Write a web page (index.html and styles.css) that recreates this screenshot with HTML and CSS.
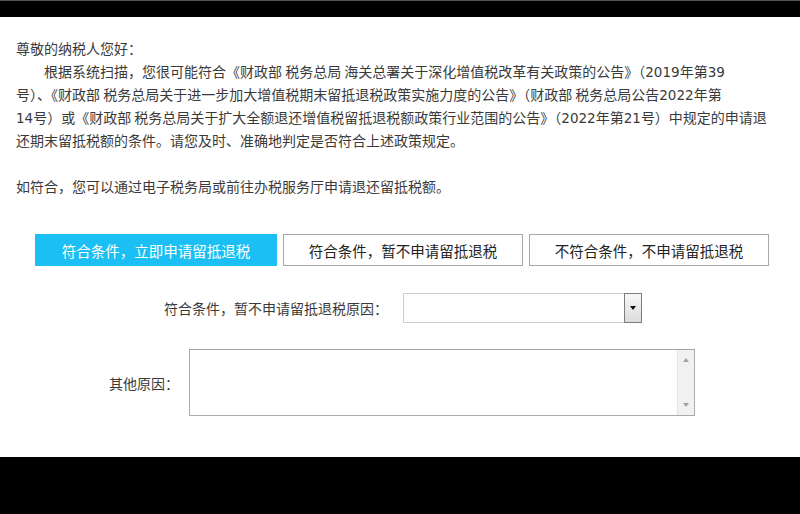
FILE: index.html
```html
<!DOCTYPE html>
<html lang="zh-CN">
<head>
<meta charset="utf-8">
<title>留抵退税提示</title>
<link rel="stylesheet" href="styles.css">
</head>
<body>
<div class="page">
  <div class="bar bar-top"></div>
  <main class="content">
    <p class="greet">尊敬的纳税人您好：</p>
    <p class="notice">根据系统扫描，您很可能符合《财政部 税务总局 海关总署关于深化增值税改革有关政策的公告》（<span class="num">2019</span>年第<span class="num">39</span><br>号）、《财政部 税务总局关于进一步加大增值税期末留抵退税政策实施力度的公告》（财政部 税务总局公告<span class="num">2022</span>年第<br><span class="num">14</span>号）或《财政部 税务总局关于扩大全额退还增值税留抵退税额政策行业范围的公告》（<span class="num">2022</span>年第<span class="num">21</span>号）中规定的申请退<br>还期末留抵税额的条件。请您及时、准确地判定是否符合上述政策规定。</p>
    <p class="tip">如符合，您可以通过电子税务局或前往办税服务厅申请退还留抵税额。</p>

    <div class="actions">
      <button class="btn btn-primary" type="button">符合条件，立即申请留抵退税</button>
      <button class="btn" type="button">符合条件，暂不申请留抵退税</button>
      <button class="btn" type="button">不符合条件，不申请留抵退税</button>
    </div>

    <div class="field field-select">
      <label class="field-label" for="reason">符合条件，暂不申请留抵退税原因：</label>
      <div class="select-wrap">
        <select id="reason" class="select"><option></option></select>
        <span class="select-arrow"><span class="tri-down"></span></span>
      </div>
    </div>

    <div class="field field-text">
      <label class="field-label" for="other">其他原因：</label>
      <div class="ta-wrap">
        <textarea id="other" class="textarea"></textarea>
        <span class="ta-scroll"><span class="sc-up"></span><span class="sc-down"></span></span>
      </div>
    </div>
  </main>
  <div class="bar bar-bottom"></div>
</div>
</body>
</html>
```

FILE: styles.css
```css
* { box-sizing: border-box; }

html, body {
  margin: 0;
  padding: 0;
  background: #ffffff;
}

body {
  font-family: "Noto Sans CJK SC", sans-serif;
  font-size: 14px;
  color: #3a3a3a;
}

.page {
  width: 800px;
  height: 514px;
  display: flex;
  flex-direction: column;
}

.bar { background: #000; flex: none; }
.bar-top { height: 17px; border-top: 1px solid #555; }
.bar-bottom { height: 57px; }

.content {
  height: 440px;
  flex: none;
  padding: 20px 16px 0 16px;
  display: flex;
  flex-direction: column;
}

.greet, .notice, .tip {
  margin: 0;
  line-height: 23px;
  white-space: nowrap;
  font-family: "Noto Sans CJK SC", sans-serif;
}

.greet { height: 23px; }
.notice { height: 92px; text-indent: 2em; }
.tip { height: 23px; margin-top: 23px; }

.num {
  font-family: "DejaVu Sans", sans-serif;
  font-size: 13.5px;
  line-height: 1;
}

.actions {
  margin-top: 36px;
  padding-left: 4px;
  display: flex;
  justify-content: center;
  gap: 6px;
}

.btn {
  width: 240px;
  height: 32px;
  margin: 0;
  padding: 0;
  border: 1px solid #a8a8a8;
  background: #ffffff;
  color: #222;
  font-family: "Noto Sans CJK SC", sans-serif;
  font-size: 14.5px;
  display: flex;
  align-items: center;
  justify-content: center;
}

.btn-primary {
  width: 242px;
  background: #1bbff3;
  border-color: #1bbff3;
  color: #ffffff;
}

.field {
  display: flex;
  align-items: center;
  justify-content: center;
}

.field-label {
  font-family: "Noto Sans CJK SC", sans-serif;
  font-size: 14px;
  color: #3a3a3a;
  white-space: nowrap;
}

.field-select { margin-top: 27px; gap: 15px; padding-left: 6px; }
.field-text { margin-top: 26px; gap: 10px; padding-left: 4px; }

.select-wrap {
  position: relative;
  width: 239px;
  height: 30px;
}

.select {
  -webkit-appearance: none;
  appearance: none;
  width: 100%;
  height: 100%;
  margin: 0;
  border: 1px solid #c9cdd0;
  border-radius: 0;
  background: #fff;
  font-family: "Noto Sans CJK SC", sans-serif;
  font-size: 14px;
}

.select-arrow {
  position: absolute;
  top: 0;
  right: 0;
  width: 18px;
  height: 30px;
  border: 1px solid #7d7d7d;
  background: linear-gradient(#f7f7f7, #dcdcdc);
  display: flex;
  align-items: center;
  justify-content: center;
}

.tri-down {
  width: 0;
  height: 0;
  border-left: 3.5px solid transparent;
  border-right: 3.5px solid transparent;
  border-top: 4px solid #111;
}

.ta-wrap {
  position: relative;
  width: 506px;
  height: 67px;
}

.textarea {
  display: block;
  width: 100%;
  height: 100%;
  margin: 0;
  border: 1px solid #ababab;
  border-top-color: #a0a0a0;
  resize: none;
  overflow: hidden;
  background: #fff;
  font-family: "Noto Sans CJK SC", sans-serif;
  font-size: 14px;
}

.ta-scroll {
  position: absolute;
  top: 1px;
  right: 1px;
  bottom: 1px;
  width: 17px;
  background: #f1f1f1;
  border-left: 1px solid #e4e4e4;
  display: flex;
  flex-direction: column;
  align-items: center;
  justify-content: space-between;
  padding: 8px 0 8px 0;
}

.sc-up {
  width: 0;
  height: 0;
  border-left: 3.5px solid transparent;
  border-right: 3.5px solid transparent;
  border-bottom: 4px solid #a3a3a3;
}

.sc-down {
  width: 0;
  height: 0;
  border-left: 3.5px solid transparent;
  border-right: 3.5px solid transparent;
  border-top: 4px solid #a3a3a3;
}
```
